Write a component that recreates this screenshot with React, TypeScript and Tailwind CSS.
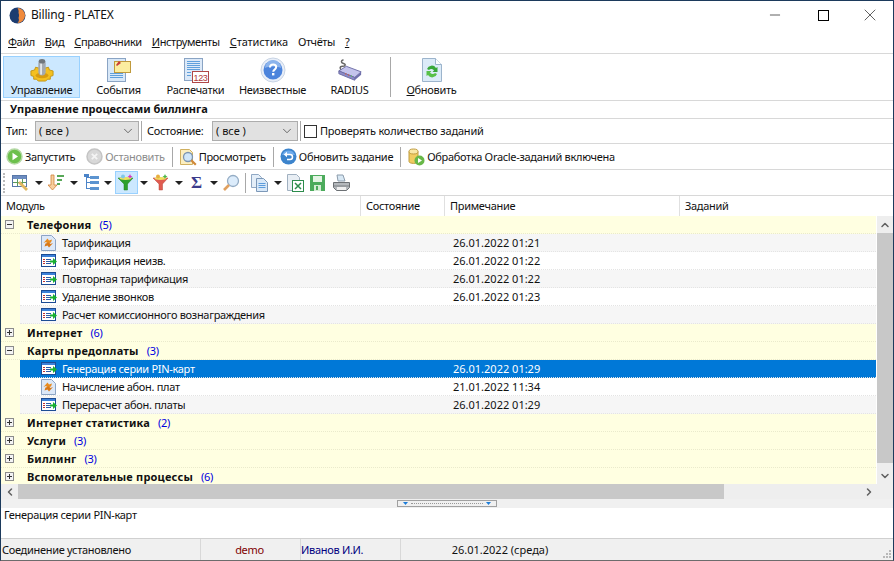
import React from 'react';
import { Minus, X, ChevronDown, ChevronUp, ChevronLeft, ChevronRight } from 'lucide-react';

const Caret = () => (
  <svg width="8" height="4" viewBox="0 0 8 4" className="shrink-0">
    <path d="M0 0h8L4 4z" fill="#222" />
  </svg>
);

const Sep = ({ h = 'h-[20px]' }: { h?: string }) => <div className={`w-px shrink-0 bg-[#a8a8a8] ${h}`} />;

// ---- big toolbar icons
const GearIcon = () => (
  <svg width="24" height="26" viewBox="0 0 26 28">
    <path d="M1 15l4-1 1-3 4 1h6l4-1 1 3 4 1v5l-3 1 0 3-3 0-2 2h-8l-2-2-3 0 0-3-3-1z" fill="#f4c020" stroke="#c09414" />
    <ellipse cx="13" cy="20" rx="7" ry="3" fill="#d89c10" />
    <rect x="9" y="3" width="8" height="17" rx="4" fill="#a4aab0" />
    <rect x="11" y="4" width="2" height="15" fill="#e4e8ea" />
    <ellipse cx="13" cy="4.5" rx="3.5" ry="2.5" fill="#70777c" />
  </svg>
);
const NoteIcon = () => (
  <svg width="26" height="26" viewBox="0 0 26 26">
    <rect x="1.5" y="1.5" width="18" height="23" fill="#d8e8f8" stroke="#8aa4c4" />
    <path d="M4 16.500h13M4 18.500h13M4 20.500h13" stroke="#5fa0dc" />
    <rect x="8.5" y="4.5" width="16" height="11" fill="#fbeea0" stroke="#c09a3c" />
    <path d="M10 8l3-4 2 2-4 3z" fill="#c83c3c" />
  </svg>
);
const PrintoutIcon = () => (
  <svg width="26" height="26" viewBox="0 0 26 26">
    <rect x="1.5" y="1.5" width="18" height="22" fill="#dce9f8" stroke="#8aa4c4" />
    <path d="M4 4.500h13M4 6.500h13M4 8.500h13M4 10.500h13M4 12.500h13M4 15.500h4M4 18.500h4" stroke="#5fa0dc" />
    <rect x="9.500" y="14.500" width="16" height="11" fill="#fff" stroke="#b04848" />
    <text x="17.500" y="23.500" textAnchor="middle" fontSize="9" fill="#b03838" fontFamily="Liberation Sans">123</text>
  </svg>
);
const HelpIcon = () => (
  <svg width="26" height="26" viewBox="0 0 26 26">
    <circle cx="13" cy="13" r="12" fill="#e8eef8" stroke="#c8d4e4" />
    <circle cx="13" cy="13" r="9.5" fill="#4c84dc" />
    <path d="M5 11a8 8 0 0 1 16 0c-4-2-12-2-16 0z" fill="#8cb4ec" />
    <path d="M10 10.5c0-2 1.4-3 3.2-3s3 1 3 2.6c0 2.6-3 2.4-3 4.6" fill="none" stroke="#fff" strokeWidth="2" />
    <rect x="12" y="16" width="2.4" height="2.4" fill="#fff" />
  </svg>
);
const RouterIcon = () => (
  <svg width="26" height="26" viewBox="0 0 28 28">
    <path d="M6 15C2 13 3 10 6 10s4-2 1-3-3-3 0-4" fill="none" stroke="#666" strokeWidth="1.6" />
    <path d="M2 15l8-5 16 6-7 6z" fill="#c4c4ec" stroke="#6c6ca4" />
    <path d="M2 15l17 7v3L2 18z" fill="#8c8cc8" stroke="#6c6ca4" />
    <path d="M19 22l7-6v3l-7 6z" fill="#7070ac" />
    <path d="M9 18l1 .4M12 19.2l1 .4" stroke="#e06040" strokeWidth="1.5" />
    <path d="M15 20.4l1 .4" stroke="#60c060" strokeWidth="1.5" />
  </svg>
);
const RefreshDocIcon = () => (
  <svg width="24" height="26" viewBox="0 0 24 26">
    <path d="M2.5 1.5h13l6 6v17h-19z" fill="#dcebf8" stroke="#9cb4cc" />
    <path d="M15.5 1.5v6h6" fill="#fff" stroke="#9cb4cc" />
    <path d="M7 12a5 5 0 0 1 9-1l1.500-1v5h-5l1.500-1.500a3 3 0 0 0-5-.5z" fill="#38a838" />
    <path d="M17 17a5 5 0 0 1-9 1l-1.500 1v-5h5L10 15.500a3 3 0 0 0 5 .5z" fill="#58c048" />
  </svg>
);

// ---- action row icons
const PlayIcon = () => (
  <svg width="17" height="17" viewBox="0 0 17 17">
    <circle cx="8.500" cy="8.500" r="7.500" fill="#6cc04c" stroke="#b4d8a4" strokeWidth="1.500" />
    <path d="M6.500 4.800l5.500 3.700-5.500 3.700z" fill="#fff" />
  </svg>
);
const StopIcon = () => (
  <svg width="17" height="17" viewBox="0 0 17 17">
    <circle cx="8.500" cy="8.500" r="7.500" fill="#d8d8d8" stroke="#c4c4c4" strokeWidth="1.500" />
    <path d="M5.800 5.800l5.400 5.400M11.200 5.800l-5.400 5.400" stroke="#f4f4f4" strokeWidth="1.800" />
  </svg>
);
const ViewIcon = () => (
  <svg width="18" height="18" viewBox="0 0 18 18">
    <path d="M1.500 1.500h9l3 3v12h-12z" fill="#fbeec0" stroke="#d0b060" />
    <circle cx="9" cy="9" r="4.500" fill="#cfe6fa" stroke="#7c94b0" strokeWidth="1.300" />
    <path d="M12.300 12.300l4.500 4.500" stroke="#d08838" strokeWidth="2.200" />
  </svg>
);
const UndoIcon = () => (
  <svg width="17" height="17" viewBox="0 0 17 17">
    <circle cx="8.500" cy="8.500" r="8" fill="#3c84cc" />
    <path d="M2 7a7 7 0 0 1 13 0z" fill="#70acec" />
    <path d="M6 6.500h4a2.500 2.500 0 0 1 0 5H7" fill="none" stroke="#fff" strokeWidth="1.500" />
    <path d="M7 3.800L3.800 6.500 7 9.200z" fill="#fff" />
  </svg>
);
const DbPlayIcon = () => (
  <svg width="18" height="18" viewBox="0 0 18 18">
    <path d="M2 3.500v10c0 2.500 9 2.500 9 0v-10z" fill="#f0cc60" stroke="#c09c40" />
    <ellipse cx="6.500" cy="3.500" rx="4.500" ry="2.500" fill="#f8e8a8" stroke="#c09c40" />
    <circle cx="12.500" cy="12.500" r="5" fill="#68b848" />
    <path d="M11 10l4 2.500-4 2.500z" fill="#fff" />
  </svg>
);

// ---- small toolbar icons
const TableIcon = () => (
  <svg width="18" height="17" viewBox="0 0 18 17">
    <rect x="0.500" y="1.500" width="14" height="11" fill="#fff" stroke="#5878a8" />
    <rect x="1" y="2" width="13" height="3" fill="#6c8cc0" />
    <path d="M5.500 5v7M10.500 5v7M1 8.500h13" stroke="#5c9c5c" />
    <path d="M8 7l8 8-2 2-8-8z" fill="#e0b860" />
  </svg>
);
const SortIcon = () => (
  <svg width="16" height="17" viewBox="0 0 16 17">
    <path d="M3 1h3v10h3l-4.500 5L0 11h3z" fill="#f8d0a0" stroke="#d08038" strokeWidth="0.800" />
    <path d="M9 2h7M9 6h5M9 10h3" stroke="#58a858" strokeWidth="2" />
  </svg>
);
const TreeIcon = () => (
  <svg width="15" height="17" viewBox="0 0 15 17">
    <path d="M2.500 2v13M2 8.500h4M2 14.500h4M2 3.500h4" stroke="#4c84c8" fill="none" />
    <rect x="0" y="0" width="5" height="3" fill="#4c84c8" />
    <rect x="6" y="2" width="9" height="3" fill="#5c94d0" />
    <rect x="6" y="7" width="9" height="3" fill="#5c94d0" />
    <rect x="6" y="13" width="9" height="3" fill="#5c94d0" />
  </svg>
);
const FunnelIcon = ({ green = false }: { green?: boolean }) => (
  <svg width="17" height="17" viewBox="0 0 17 17">
    <path d="M0 4h15L9.500 10v6H6v-6z" fill={green ? '#2ca02c' : '#e05c50'} stroke={green ? '#1c801c' : '#b84438'} strokeWidth="0.500" />
    <ellipse cx="7.500" cy="4.500" rx="6" ry="1.500" fill="#f0e060" />
    <circle cx="5" cy="2.500" r="2" fill={green ? '#80c8e8' : '#e8b040'} />
    {green ? (
      <path d="M12 0l.8 1.700 1.700.8-1.700.8-.8 1.700-.8-1.700-1.700-.8 1.700-.8z" fill="#d838c0" />
    ) : (
      <path d="M12 0l.8 1.700 1.700.8-1.700.8-.8 1.700-.8-1.700-1.700-.8 1.700-.8z" fill="#48b848" />
    )}
  </svg>
);
const MagnifierIcon = () => (
  <svg width="18" height="18" viewBox="0 0 18 18">
    <circle cx="11" cy="7" r="5.500" fill="#dcecfb" stroke="#94acc4" strokeWidth="1.300" />
    <path d="M7 11l-5 5" stroke="#e0a060" strokeWidth="2.600" />
  </svg>
);
const DocsIcon = () => (
  <svg width="17" height="18" viewBox="0 0 17 18">
    <path d="M0.500 0.500h7l3 3v10h-10z" fill="#e4eef8" stroke="#90a8c4" />
    <path d="M5.500 4.500h7l4 4v9h-11z" fill="#d8e8f8" stroke="#7c98b8" />
    <path d="M7.500 9.500h7M7.500 11.500h7M7.500 13.500h7" stroke="#5c9cdc" />
  </svg>
);
const ExcelIcon = () => (
  <svg width="17" height="18" viewBox="0 0 17 18">
    <path d="M0.500 0.500h9l3 3v13h-12z" fill="#e8eef4" stroke="#a0b0c0" />
    <rect x="5.500" y="6.500" width="11" height="11" fill="#fff" stroke="#2c8c4c" />
    <path d="M8 9l6 6M14 9l-6 6" stroke="#2c8c4c" strokeWidth="1.500" />
  </svg>
);
const SaveIcon = () => (
  <svg width="15" height="16" viewBox="0 0 15 16">
    <path d="M0 0h15v16H0z" fill="#4cab5c" />
    <rect x="3" y="1" width="9" height="6" fill="#e4f4e4" />
    <rect x="4" y="10" width="7" height="6" fill="#d4ecd4" />
    <rect x="6" y="11" width="2" height="4" fill="#4cab5c" />
  </svg>
);
const PrinterIcon = () => (
  <svg width="17" height="17" viewBox="0 0 17 17">
    <path d="M4 1h6l2 6H5z" fill="#d8e8f4" stroke="#8c9cac" />
    <path d="M0.500 8.500h16v5l-3 3h-10l-3-3z" fill="#b4b8bc" stroke="#6c7074" />
    <path d="M1 12h15" stroke="#7c8084" />
    <rect x="4" y="13" width="9" height="3" fill="#f0f0f0" />
  </svg>
);

// ---- tree rows
const Expander = ({ open }: { open: boolean }) => (
  <svg width="9" height="9" viewBox="0 0 9 9" className="shrink-0">
    <rect x="0.500" y="0.500" width="8" height="8" fill="#f4f4f4" stroke="#8c8c8c" />
    <path d="M2 4.500h5" stroke="#333" />
    {!open && <path d="M4.500 2v5" stroke="#333" />}
  </svg>
);
const TaskIcon = () => (
  <svg width="16" height="13" viewBox="0 0 16 13" className="shrink-0">
    <rect x="0.500" y="0.500" width="14" height="12" fill="#fff" stroke="#1c4c94" />
    <rect x="1" y="1" width="13" height="2" fill="#3c80d8" />
    <path d="M2 5.500h2M2 7.500h2M2 9.500h2" stroke="#c03030" />
    <path d="M5 5.500h5M5 7.500h4M5 9.500h5" stroke="#2c5ca8" />
    <path d="M9 6.500h3V4l4 3.500-4 3.500V8.500H9z" fill="#18b030" />
  </svg>
);
const GearDocIcon = () => (
  <svg width="15" height="16" viewBox="0 0 15 16" className="shrink-0">
    <path d="M0.500 0.500h10l4 4v11h-14z" fill="#dce8f8" stroke="#8ca4c4" />
    <path d="M2.500 8l4-4.500 1.500 2 3-1-1 3-3.500 1L5 7z" fill="#e88c20" />
    <path d="M12 8l-4 4.500-1.500-2-3 1 1-3 3.500-1 1.500 1.500z" fill="#d87818" />
  </svg>
);

type Row = {
  type: 'group' | 'item';
  label: string;
  count?: number;
  open?: boolean;
  note?: string;
  gear?: boolean;
  selected?: boolean;
};

const rows: Row[] = [
  { type: 'group', label: 'Телефония', count: 5, open: true },
  { type: 'item', label: 'Тарификация', note: '26.01.2022 01:21', gear: true },
  { type: 'item', label: 'Тарификация неизв.', note: '26.01.2022 01:22' },
  { type: 'item', label: 'Повторная тарификация', note: '26.01.2022 01:22' },
  { type: 'item', label: 'Удаление звонков', note: '26.01.2022 01:23' },
  { type: 'item', label: 'Расчет комиссионного вознаграждения' },
  { type: 'group', label: 'Интернет', count: 6 },
  { type: 'group', label: 'Карты предоплаты', count: 3, open: true },
  { type: 'item', label: 'Генерация серии PIN-карт', note: '26.01.2022 01:29', selected: true },
  { type: 'item', label: 'Начисление абон. плат', note: '21.01.2022 11:34', gear: true },
  { type: 'item', label: 'Перерасчет абон. платы', note: '26.01.2022 01:29' },
  { type: 'group', label: 'Интернет статистика', count: 2 },
  { type: 'group', label: 'Услуги', count: 3 },
  { type: 'group', label: 'Биллинг', count: 3 },
  { type: 'group', label: 'Вспомогательные процессы', count: 6 },
];

const BigButton = ({ icon, label, active }: { icon: React.ReactNode; label: React.ReactNode; active?: boolean }) => (
  <div
    className={`flex h-[42px] w-[77px] shrink-0 flex-col items-center border ${
      active ? 'border-[#99d1ff] bg-[#cce8ff]' : 'border-transparent'
    }`}
  >
    <div className="flex h-[26px] shrink-0 items-center">{icon}</div>
    <span className="leading-[14px]">{label}</span>
  </div>
);

const TreeRow = ({ row, stripe }: { row: Row; stripe: boolean }) => {
  if (row.type === 'group') {
    return (
      <div className="flex h-[18px] shrink-0 items-center border-b border-dotted border-[#eaeacc] bg-[#ffffe1]">
        <div className="flex w-[26px] shrink-0 pl-[4px]">
          <Expander open={!!row.open} />
        </div>
        <span className="pt-px font-bold tracking-[0.2px]">{row.label}</span>
        <span className="ml-[8px] pt-px text-[#0000e0]">({row.count})</span>
      </div>
    );
  }
  const bg = row.selected ? 'bg-[#0078d7] text-white' : stripe ? 'bg-[#f6f6f6]' : 'bg-white';
  return (
    <div className="flex h-[18px] shrink-0 items-center bg-[#ffffe1]">
      <div className={`ml-[19px] flex h-full flex-1 items-center border-b border-dotted border-[#e4e4e4] pl-[21px] ${bg}`}>
        <div className="flex w-[19px] shrink-0">{row.gear ? <GearDocIcon /> : <TaskIcon />}</div>
        <span className="w-[302px] shrink-0 pl-[2px] pt-px">{row.label}</span>
        <span className="w-[83px] shrink-0" />
        <span className="pl-[8px] pt-px tracking-normal">{row.note}</span>
      </div>
    </div>
  );
};

const stripeFlags = (() => {
  let n = 0;
  return rows.map((r) => {
    if (r.type === 'group') {
      n = 0;
      return false;
    }
    n += 1;
    return n % 2 === 1;
  });
})();

export default function App() {
  return (
    <div className="flex h-[561px] w-[894px] flex-col overflow-hidden border border-b-[#6c6c6c] border-l-[#1c3a5c] border-r-[#1c3a5c] border-t-[#1c3a5c] bg-white font-['Noto_Sans',sans-serif] text-[11px] tracking-[-0.3px] text-[#111]">
      {/* Title bar */}
      <div className="flex h-[30px] shrink-0 items-center pb-[2px] pl-[8px]">
        <svg width="17" height="17" viewBox="0 0 17 17">
          <circle cx="8.500" cy="8.500" r="8" fill="#1c3c70" />
          <path d="M8.500 1a7.500 7.500 0 0 1 0 15c2-2 1.500-4 1-5 .7-1.500.7-4 0-5 .5-1.500 0-3.500-1-5z" fill="#f08a3c" />
        </svg>
        <span className="ml-[5px] text-[12px] tracking-[-0.2px]">Billing - PLATEX</span>
        <div className="ml-auto flex items-center">
          <Minus className="mr-[35px] h-[16px] w-[16px]" strokeWidth={1} />
          <div className="mr-[31px] h-[11px] w-[11px] border border-black" />
          <X className="mr-[13px] h-[20px] w-[20px]" strokeWidth={0.8} />
        </div>
      </div>

      {/* Menu */}
      <div className="flex h-[23px] shrink-0 items-center gap-[10px] border-b border-[#d8d8d8] pl-[7px] tracking-[-0.4px]">
        <span><u>Ф</u>айл</span>
        <span><u>В</u>ид</span>
        <span><u>С</u>правочники</span>
        <span><u>И</u>нструменты</span>
        <span className="tracking-[-0.1px]"><u>С</u>татистика</span>
        <span>Отчёты</span>
        <span><u>?</u></span>
      </div>

      {/* Big toolbar */}
      <div className="flex h-[47px] shrink-0 items-center border-b border-[#d8d8d8] pl-[2px]">
        <BigButton active icon={<GearIcon />} label="Управление" />
        <BigButton icon={<NoteIcon />} label="События" />
        <BigButton icon={<PrintoutIcon />} label="Распечатки" />
        <BigButton icon={<HelpIcon />} label="Неизвестные" />
        <BigButton icon={<RouterIcon />} label="RADIUS" />
        <div className="ml-[2px] mr-[2px]">
          <Sep h="h-[40px]" />
        </div>
        <BigButton icon={<RefreshDocIcon />} label={<><u>О</u>бновить</>} />
      </div>

      {/* Section title */}
      <div className="flex h-[18px] shrink-0 items-center border-b border-[#d8d8d8] pl-[9px] font-bold tracking-normal">
        Управление процессами биллинга
      </div>

      {/* Filters */}
      <div className="flex h-[25px] shrink-0 items-center border-b border-[#d8d8d8] pl-[5px]">
        <span className="w-[29px] pt-px">Тип:</span>
        <div className="flex h-[20px] w-[104px] items-center justify-between border border-[#adadad] bg-[#e1e1e1] px-[3px]">
          <span className="pt-px tracking-normal">( все )</span>
          <ChevronDown className="h-[14px] w-[14px] text-[#444]" strokeWidth={1.3} />
        </div>
        <div className="ml-[2px] mr-[5px]"><Sep /></div>
        <span className="w-[65px] pt-px">Состояние:</span>
        <div className="flex h-[20px] w-[86px] items-center justify-between border border-[#adadad] bg-[#e1e1e1] px-[3px]">
          <span className="pt-px tracking-normal">( все )</span>
          <ChevronDown className="h-[14px] w-[14px] text-[#444]" strokeWidth={1.3} />
        </div>
        <div className="ml-[2px] mr-[3px]"><Sep /></div>
        <div className="h-[13px] w-[13px] border border-[#333] bg-white" />
        <span className="ml-[3px] pt-px tracking-[-0.2px]">Проверять количество заданий</span>
      </div>

      {/* Actions */}
      <div className="flex h-[26px] shrink-0 items-center border-b border-[#d8d8d8] pl-[5px]">
        <PlayIcon />
        <span className="ml-[2px] pt-px">Запустить</span>
        <div className="ml-[11px]"><StopIcon /></div>
        <span className="ml-[2px] pt-px text-[#8c8c8c]">Остановить</span>
        <div className="ml-[7px] mr-[6px]"><Sep /></div>
        <ViewIcon />
        <span className="ml-[2px] pt-px">Просмотреть</span>
        <div className="ml-[7px] mr-[6px]"><Sep /></div>
        <UndoIcon />
        <span className="ml-[2px] pt-px">Обновить задание</span>
        <div className="ml-[7px] mr-[6px]"><Sep /></div>
        <DbPlayIcon />
        <span className="ml-[2px] pt-px">Обработка Oracle-заданий включена</span>
      </div>

      {/* Icon toolbar */}
      <div className="flex h-[26px] shrink-0 items-center border-b border-[#d8d8d8] pl-[2px]">
        <div className="mr-[7px] h-[20px] w-[2px] border-l-2 border-dotted border-[#bbbbbb]" />
        <TableIcon />
        <div className="ml-[5px] mr-[5px]"><Caret /></div>
        <SortIcon />
        <div className="ml-[6px] mr-[6px]"><Caret /></div>
        <TreeIcon />
        <div className="ml-[5px] mr-[3px]"><Caret /></div>
        <div className="flex h-[23px] w-[23px] items-center justify-center border border-[#99d1ff] bg-[#cce8ff]">
          <FunnelIcon green />
        </div>
        <div className="ml-[2px] mr-[5px]"><Caret /></div>
        <FunnelIcon />
        <div className="ml-[5px] mr-[6px]"><Caret /></div>
        <span className="w-[15px] text-center font-['Liberation_Serif',serif] text-[17px] font-bold leading-none text-[#3c3c8c]">Σ</span>
        <div className="ml-[6px] mr-[4px]"><Caret /></div>
        <MagnifierIcon />
        <div className="ml-[5px] mr-[5px]"><Sep /></div>
        <DocsIcon />
        <div className="ml-[6px] mr-[5px]"><Caret /></div>
        <ExcelIcon />
        <div className="ml-[6px]"><SaveIcon /></div>
        <div className="ml-[8px]"><PrinterIcon /></div>
      </div>

      {/* Column header */}
      <div className="flex h-[20px] shrink-0 items-stretch">
        <div className="flex w-[360px] items-center border-r border-[#e0e0e0] pl-[5px]">Модуль</div>
        <div className="flex w-[84px] items-center border-r border-[#e0e0e0] pl-[5px]">Состояние</div>
        <div className="flex w-[235px] items-center border-r border-[#e0e0e0] pl-[5px]">Примечание</div>
        <div className="flex flex-1 items-center pl-[5px]">Заданий</div>
      </div>

      {/* Tree with vertical scrollbar */}
      <div className="flex h-[268px] shrink-0">
        <div className="flex flex-1 flex-col overflow-hidden border-r border-white">
          {rows.map((row, i) => (
            <TreeRow key={row.label} row={row} stripe={stripeFlags[i]} />
          ))}
        </div>
        <div className="flex w-[16px] shrink-0 flex-col bg-[#eeeeee]">
          <div className="flex h-[17px] items-center justify-center">
            <ChevronUp className="h-[12px] w-[12px] text-[#606060]" strokeWidth={3} />
          </div>
          <div className="h-[230px] bg-[#c8c8c8]" />
          <div className="flex flex-1 items-end justify-center pb-[2px]">
            <ChevronDown className="h-[12px] w-[12px] text-[#606060]" strokeWidth={3} />
          </div>
        </div>
      </div>

      {/* Horizontal scrollbar */}
      <div className="flex h-[15px] shrink-0 items-stretch bg-[#eeeeee]">
        <div className="flex w-[17px] items-center justify-center">
          <ChevronLeft className="h-[12px] w-[12px] text-[#606060]" strokeWidth={3} />
        </div>
        <div className="w-[706px] bg-[#c8c8c8]" />
        <div className="ml-[136px] flex w-[17px] items-center justify-center">
          <ChevronRight className="h-[12px] w-[12px] text-[#606060]" strokeWidth={3} />
        </div>
      </div>

      {/* Splitter */}
      <div className="flex h-[9px] shrink-0 items-center bg-[#f0f0f0] pl-[396px]">
        <div className="flex h-[7px] w-[100px] items-center justify-between border border-[#a0a0a0] px-[5px]">
          <svg width="5" height="3" viewBox="0 0 5 3"><path d="M0 0h5L2.500 3z" fill="#1c7cd8" /></svg>
          <div className="mx-[3px] h-px flex-1 border-t border-dotted border-[#999]" />
          <svg width="5" height="3" viewBox="0 0 5 3"><path d="M0 0h5L2.500 3z" fill="#1c7cd8" /></svg>
        </div>
      </div>

      {/* Detail */}
      <div className="h-[31px] shrink-0 border-b border-[#d0d0d0] pl-[3px] leading-[14px]">Генерация серии PIN-карт</div>

      {/* Status bar */}
      <div className="flex flex-1 items-stretch bg-[#f0f0f0]">
        <div className="flex w-[200px] items-center border-r border-[#d8d8d8] pl-px pt-px">Соединение установлено</div>
        <div className="flex w-[100px] items-center justify-center border-r border-[#d8d8d8] pr-[2px] pt-px text-[#800000]">demo</div>
        <div className="flex w-[100px] items-center border-r border-[#d8d8d8] pt-px text-[#000080]">Иванов И.И.</div>
        <div className="flex w-[198px] items-center justify-center pt-px tracking-normal">26.01.2022 (среда)</div>
        <div className="ml-auto flex items-end pb-px pr-px">
          <svg width="10" height="10" viewBox="0 0 10 10">
            <path d="M7 1h2v2H7zM4 4h2v2H4zM7 4h2v2H7zM1 7h2v2H1zM4 7h2v2H4zM7 7h2v2H7z" fill="#b8b8b8" />
          </svg>
        </div>
      </div>
    </div>
  );
}
